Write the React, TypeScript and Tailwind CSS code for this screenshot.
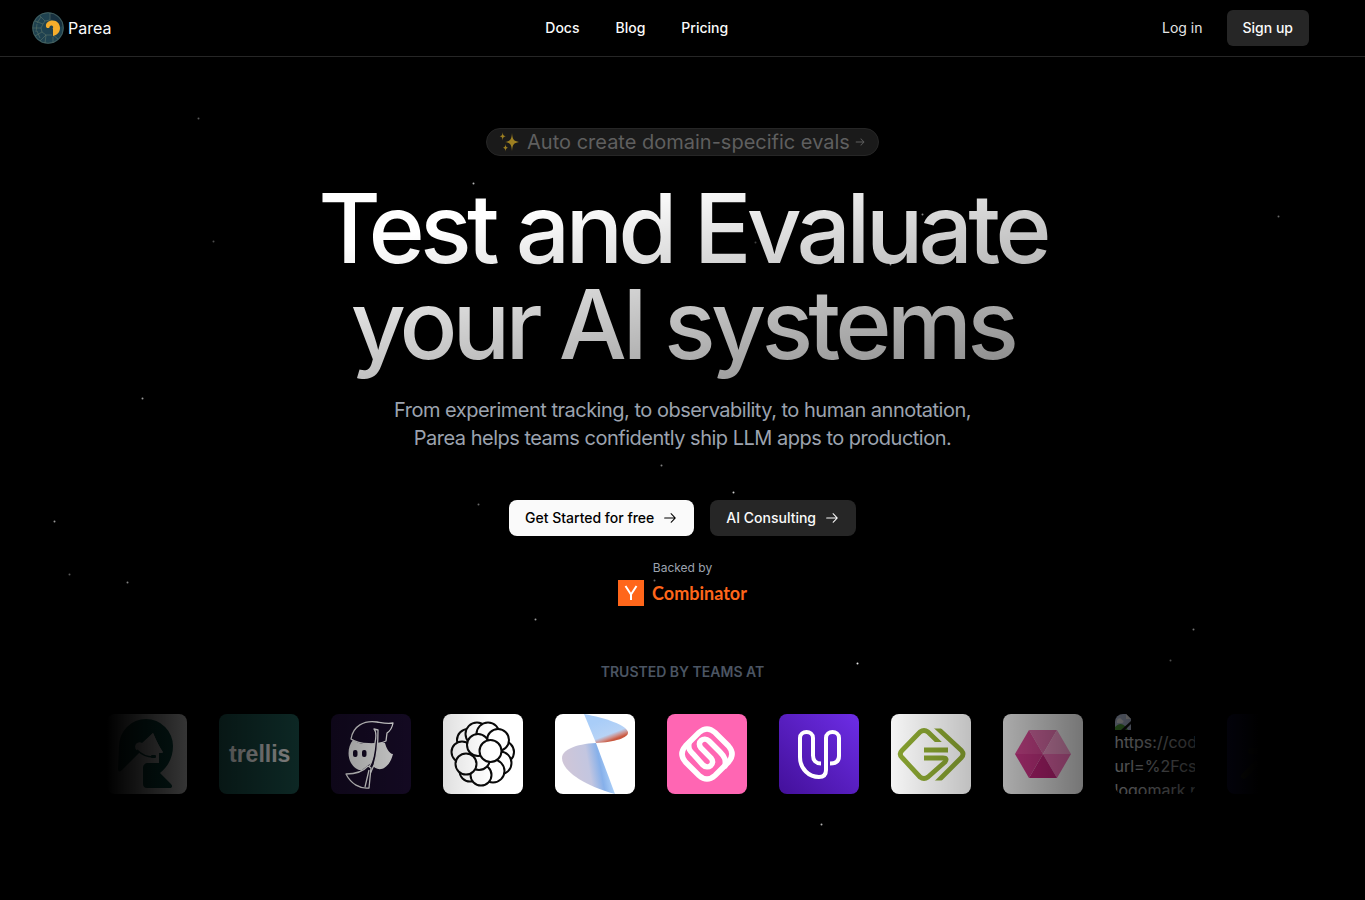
import React from 'react';
import clsx from 'clsx';

const NAV_LINKS = ['Docs', 'Blog', 'Pricing'];

// x, y, opacity
const PARTICLES = [
  [198, 118, 0.35],
  [473, 183, 0.7],
  [213, 241, 0.3],
  [1278, 216, 0.4],
  [922, 214, 0.5],
  [755, 242, 0.25],
  [890, 264, 0.6],
  [142, 398, 0.6],
  [661, 465, 0.5],
  [478, 504, 0.4],
  [733, 492, 0.8],
  [54, 521, 0.6],
  [69, 574, 0.35],
  [127, 582, 0.5],
  [654, 580, 0.4],
  [535, 619, 0.6],
  [1193, 629, 0.45],
  [857, 663, 0.9],
  [1170, 660, 0.3],
  [821, 824, 0.7],
];

const ArrowRight = ({ className }: { className?: string }) => (
  <svg className={className} viewBox="0 0 15 15" fill="none" aria-hidden="true">
    <path
      d="M8.15 3.15a.5.5 0 0 1 .7 0l4 4a.5.5 0 0 1 0 .7l-4 4a.5.5 0 0 1-.7-.7L11.29 8H2.5a.5.5 0 0 1 0-1h8.79L8.15 3.85a.5.5 0 0 1 0-.7Z"
      fill="currentColor"
    />
  </svg>
);

const PareaLogo = () => (
  <svg className="size-8" viewBox="0 0 32 32" fill="none" aria-hidden="true">
    <circle cx="16" cy="16" r="15.8" fill="#1f4250" />
    <path d="M18 1v7c5-1 9 2 10 7l3-1C30 6 25 1.500 18 1Z" fill="#17303f" />
    <g stroke="#5d7468" strokeWidth=".6">
      <circle cx="16" cy="16" r="15.300" />
      <path d="M18 1v7L13 9 8 4M13 9l-2 3-8-3M11 12l-2 4H1M9 16l1 4-7 4M10 20l4 3-6 6M14 23h7v8M14 23l-1 8M21 23l5 4M5 11l4-6M4 20l1-8M8 26l-3-7" />
    </g>
    <path
      d="M14 14.500c-.5-3.500 2.500-6 6.500-6 4.500 0 7.500 3.500 7.500 7.500 0 4.500-3 7-7 8l-.5-7.500c1.200-1 .8-2.800-.7-3-1.500-.2-2.300.8-2.300 2-1.800 1-3.200.5-3.500-1Z"
      fill="#f5ad2c"
    />
    <path d="M20.500 16.500V25M20 16c-1.500-.6-2.500.8-1.500 1.600" stroke="#24404a" strokeWidth="1" />
  </svg>
);

const Sparkles = () => (
  <svg className="h-5 w-5" viewBox="0 0 20 20" fill="#f6c526" aria-hidden="true">
    <path d="M13 1c.5 6.500 1.500 8 7 9-5.500 1-6.500 2.500-7 9-.5-6.500-1.500-8-7-9 5.500-1 6.500-2.500 7-9Z" />
    <path d="M3.700 0c.2 2.900.6 3.700 3 4.200-2.400.5-2.800 1.400-3 4.300-.2-2.900-.6-3.800-3-4.300 2.400-.5 2.800-1.300 3-4.200Z" />
    <path d="M6.500 12c.2 2.500.5 3.200 2.500 3.700-2 .5-2.300 1.300-2.500 3.800-.2-2.500-.5-3.300-2.500-3.800 2-.5 2.300-1.200 2.500-3.700Z" />
  </svg>
);

const HeadsetLogo = () => (
  <svg viewBox="0 0 80 80" aria-hidden="true">
    <rect width="80" height="80" fill="#fff" />
    <path
      d="M12 32a27 27 0 0 1 54 0c0 10-4 20-13 27l11 11c2 2 1 4-1 4H40c-3 0-4-2-4-4V54c0-3 2-5 5-5h11V39h4l-7-13-3-7-10 10-2 8L15 56c-2 2-4 2-4-1Z"
      fill="#0a5a50"
    />
    <path d="m46 19-11 10a4.500 4.500 0 1 0-4 8c4 5 8 7 15 7l6-4v-2h4l-4-6Z" fill="#fff" />
    <path d="M30 36c5 5 9 7 16 7" stroke="#0a5a50" strokeWidth="1.500" fill="none" />
    <rect x="44" y="41" width="5" height="3" rx="1" fill="#0a5a50" />
  </svg>
);

const TrellisLogo = () => (
  <svg viewBox="0 0 80 80" role="img" aria-label="trellis">
    <rect width="80" height="80" fill="#194e48" />
    <text x="10" y="48" fill="#fff" fontSize="23" fontWeight="700" fontFamily="Liberation Sans, sans-serif">
      trellis
    </text>
  </svg>
);

const MaskLogo = () => (
  <svg viewBox="0 0 80 80" aria-hidden="true">
    <rect width="80" height="80" fill="#180c2a" />
    <path
      d="M22 26c-5 6-6 16-2 23 3 5 8 8 11 7l9-7c6 11 18 7 22-9-4 0-7-7-8-11l-11-1-9 2c-5 0-9-2-12-4Z"
      fill="#fff"
    />
    <g fill="#180c2a" stroke="#fff" strokeWidth="1.300" strokeLinejoin="round">
      <path d="M20 25C22 12 33 6 46 8c6 1 10 2 16 1-1 6-3 8-6 10l-1 8c-8 4-26 4-35-2Z" />
      <path d="M43 15c3 3 2 9 1 14-1 8-1 15-5 22l-3 8 3 1 4-9c3-9 4-21 4-35Z" />
      <path d="M15 60c8 0 16-1 22-8l3 2-2 20c-9 1-18-4-23-14ZM34 73l4-17" />
    </g>
    <rect x="22" y="36" width="4.500" height="7" rx="2" fill="#180c2a" />
    <rect x="31" y="36" width="4.500" height="7" rx="2" fill="#180c2a" />
  </svg>
);

// painted back to front
const BUBBLES = [
  [27, 57, 10.5],
  [25, 26, 11],
  [34, 20, 11.5],
  [45, 20, 11.5],
  [60, 38, 11],
  [57, 49, 11.5],
  [50, 57, 11.5],
  [55, 26, 11],
  [19, 38, 10.5],
  [38, 61, 10.5],
  [36, 45, 11],
  [23, 50, 10.5],
  [35, 31, 11],
  [47.5, 37, 11],
];

const BubblesLogo = () => (
  <svg viewBox="0 0 80 80" aria-hidden="true">
    <rect width="80" height="80" fill="#fff" />
    <g fill="#fff" stroke="#0a0a0a" strokeWidth="2">
      {BUBBLES.map(([cx, cy, r], idx) => (
        <circle key={`bubble-${idx}`} cx={cx} cy={cy} r={r} />
      ))}
    </g>
  </svg>
);

const PropellerLogo = () => (
  <svg viewBox="0 0 80 80" aria-hidden="true">
    <defs>
      <linearGradient id="blade-top" x1="42" y1="8" x2="50" y2="29" gradientUnits="userSpaceOnUse">
        <stop offset="0" stopColor="#a9cdf8" />
        <stop offset=".7" stopColor="#b7d3f6" />
        <stop offset=".88" stopColor="#cf8c86" />
        <stop offset="1" stopColor="#c9583f" />
      </linearGradient>
      <linearGradient id="blade-bottom" x1="10" y1="50" x2="55" y2="42" gradientUnits="userSpaceOnUse">
        <stop offset="0" stopColor="#cfc6d8" />
        <stop offset=".5" stopColor="#c3c6e0" />
        <stop offset=".75" stopColor="#86b0ea" />
        <stop offset="1" stopColor="#b4d6fb" />
      </linearGradient>
    </defs>
    <rect width="80" height="80" fill="#fff" />
    <path d="M29 0c22 4 42 11 44 18 1 6-14 10-32 11Z" fill="url(#blade-top)" />
    <path d="M41 29C20 30 7 36 7 44c0 12 20 27 53 36Z" fill="url(#blade-bottom)" />
  </svg>
);

const KnotLogo = () => (
  <svg viewBox="0 0 80 80" aria-hidden="true">
    <rect width="80" height="80" fill="#ff66b3" />
    <g fill="none" stroke="#fff" strokeWidth="5.500" strokeLinecap="round">
      <path d="M32 18.500q8-7 16 0L61.500 32q7 8 0 16L48 61.500q-8 7-16 0L18.500 48q-7-8 0-16Z" />
      <path d="M22 29c-1 6 1 8 4 11l10 11c5 5 13-1 8-7L34 34c-5-6 3-12 8-7l11 11c5 5 6 8 5 14" />
    </g>
  </svg>
);

const LoopLogo = () => (
  <svg viewBox="0 0 80 80" aria-hidden="true">
    <defs>
      <linearGradient id="violet" x1="1" y1="0" x2="0" y2="1">
        <stop offset="0" stopColor="#6d2de6" />
        <stop offset="1" stopColor="#43109a" />
      </linearGradient>
    </defs>
    <rect width="80" height="80" fill="url(#violet)" />
    <path
      d="M42 49.500c-5 0-8-3-8-8V24c0-8-13-8-13 0v19c0 12 9 20 19 20 5 0 7-3 7-7V24c0-8 13-8 13 0v18c0 5-3 7.500-9 7.500"
      fill="none"
      stroke="#fff"
      strokeWidth="4"
    />
  </svg>
);

const DiamondLogo = () => (
  <svg viewBox="0 0 80 80" aria-hidden="true">
    <defs>
      <clipPath id="diamond-left">
        <path d="M0 0h80v28H42v6h38v46H0Z" />
      </clipPath>
      <clipPath id="diamond-right">
        <path d="M40 14.500h40v52H40Z" />
      </clipPath>
    </defs>
    <rect width="80" height="80" fill="#fff" />
    <g fill="none" stroke="#8ca832" strokeWidth="4.800" strokeLinejoin="round">
      <path
        d="M52 32.500 37 18q-4-3-8 0L11 36.500q-3.500 3.500 0 7L29 63q4 3 8 0l17-15q3-4-2-4H33"
        clipPath="url(#diamond-left)"
      />
      <path d="M33 36h24" />
      <path d="m43 11 27.500 25.500q3 3.500 0 7L43 71" clipPath="url(#diamond-right)" />
    </g>
  </svg>
);

const HexagonLogo = () => (
  <svg viewBox="0 0 80 80" aria-hidden="true">
    <rect width="80" height="80" fill="#fff" />
    <path d="M40 40 26 16h28Z" fill="#ea74b4" />
    <path d="M40 40 54 16l14 24Z" fill="#f79ccd" />
    <path d="M40 40h28L54 64Z" fill="#f26db6" />
    <path d="m40 40 14 24H26Z" fill="#cb2580" />
    <path d="M40 40 26 64 12 40Z" fill="#dc3a92" />
    <path d="M40 40H12l14-24Z" fill="#e54d9e" />
  </svg>
);

const MissingLogo = () => (
  <div className="h-20 w-20 overflow-hidden text-left text-base leading-6 text-[#e5e7eb]">
    <svg className="block size-4" viewBox="0 0 16 16" aria-hidden="true">
      <path d="M0 0h11l5 5v11H0Z" fill="#c4d2ee" />
      <path d="M11 0v5h5Z" fill="#fff" />
      <path d="M2 7c0-3 4-4 5-1 2 0 2 3 0 3H2Z" fill="#fff" />
      <path d="M0 16v-3c4-4 7-4 11 0l2 3Z" fill="#4ea336" />
      <path d="m6 16 10-9v3l-6 6Z" fill="#111" />
    </svg>
    <p className="whitespace-nowrap">https://codestory.ai</p>
    <p className="whitespace-nowrap">url=%2Fcs</p>
    <p className="whitespace-nowrap">logomark.p</p>
  </div>
);

const NightLogo = () => (
  <svg viewBox="0 0 80 80" aria-hidden="true">
    <rect width="80" height="80" fill="#211f7c" />
    <path d="m17 62 12-12M24 37h10" stroke="#5c5a50" strokeWidth="6" strokeLinecap="round" />
  </svg>
);

const LOGOS = [
  HeadsetLogo,
  TrellisLogo,
  MaskLogo,
  BubblesLogo,
  PropellerLogo,
  KnotLogo,
  LoopLogo,
  DiamondLogo,
  HexagonLogo,
  MissingLogo,
  NightLogo,
];

const Particles = () => (
  <svg className="pointer-events-none absolute inset-0 h-full w-full" aria-hidden="true">
    <g transform="translate(.5 .5)">
      {PARTICLES.map(([x, y, opacity], idx) => (
        <circle key={`particle-${idx}`} cx={x} cy={y} r="1" fill="#fff" opacity={opacity} />
      ))}
    </g>
  </svg>
);

const Header = () => (
  <header className="border-b border-[#262626]">
    <div className="flex h-14 items-center justify-between px-8">
      <a href="#" className="flex items-center gap-1 text-base">
        <PareaLogo />
        Parea
      </a>
      <nav className="flex gap-9 text-sm font-medium">
        {NAV_LINKS.map((label) => (
          <a key={label} href="#">
            {label}
          </a>
        ))}
      </nav>
      <div className="mr-6 flex items-center gap-6 text-sm">
        <a href="#" className="text-[#e5e5e5]">
          Log in
        </a>
        <a href="#" className="flex h-9 items-center rounded-md bg-[#262626] px-4 font-medium">
          Sign up
        </a>
      </div>
    </div>
  </header>
);

const ActionButton = ({ label, primary }: { label: string; primary?: boolean }) => (
  <button
    type="button"
    className={clsx(
      'flex h-9 items-center gap-2 rounded-lg px-4 text-sm font-medium',
      primary ? 'bg-[#fafafa] text-black' : 'bg-[#262626] text-[#fafafa]',
    )}
  >
    {label}
    <ArrowRight className="size-4" />
  </button>
);

export default function App() {
  return (
    <div className="relative min-h-screen overflow-hidden bg-black font-[Inter,sans-serif] text-[#fafafa]">
      <Particles />
      <Header />

      <main className="relative mx-auto max-w-7xl px-8 pt-[71px] pb-24 text-center">
        <a
          href="#"
          className="mx-auto flex h-7 w-fit items-center rounded-full border border-[#262626] bg-[#1a1a1a] px-3 text-xl text-[#5f5f5f]"
        >
          <span className="mr-2 opacity-60">
            <Sparkles />
          </span>
          Auto create domain-specific evals
          <ArrowRight className="ml-1 size-3" />
        </a>

        <h1 className="bg-linear-to-br from-white from-30% to-white/40 bg-clip-text py-6 text-8xl leading-none font-medium tracking-tighter text-transparent">
          Test and Evaluate
          <br />
          your AI systems
        </h1>

        <p className="mb-12 text-xl tracking-tight text-[#9ca3af]">
          From experiment tracking, to observability, to human annotation,
          <br />
          Parea helps teams confidently ship LLM apps to production.
        </p>

        <div className="flex justify-center gap-4">
          <ActionButton label="Get Started for free" primary />
          <ActionButton label="AI Consulting" />
        </div>

        <div className="mt-6 flex flex-col items-center gap-1">
          <span className="text-xs text-[#9ca3af]">Backed by</span>
          <div className="flex items-center gap-2 text-[#ff661a]">
            <svg className="size-[26px]" viewBox="0 0 26 26" aria-hidden="true">
              <rect width="26" height="26" fill="#ff661a" />
              <path d="m7.500 6 5.500 8.500L18.500 6M13 13.500V20" fill="none" stroke="#fff" strokeWidth="2" />
            </svg>
            <span className="font-[Lato,sans-serif] text-lg leading-6 font-bold">Combinator</span>
          </div>
        </div>

        <h2 className="mt-14 text-sm font-semibold text-[#4b5563]">TRUSTED BY TEAMS AT</h2>

        <div className="relative mx-auto mt-8 flex max-w-6xl gap-8 overflow-hidden">
          {LOGOS.map((Logo, idx) => (
            <div key={`logo-${idx}`} className="size-20 shrink-0 overflow-hidden rounded-lg">
              <Logo />
            </div>
          ))}
          <div className="pointer-events-none absolute inset-y-0 left-0 w-1/3 bg-linear-to-r from-black" />
          <div className="pointer-events-none absolute inset-y-0 right-0 w-1/3 bg-linear-to-l from-black" />
        </div>
      </main>
    </div>
  );
}
